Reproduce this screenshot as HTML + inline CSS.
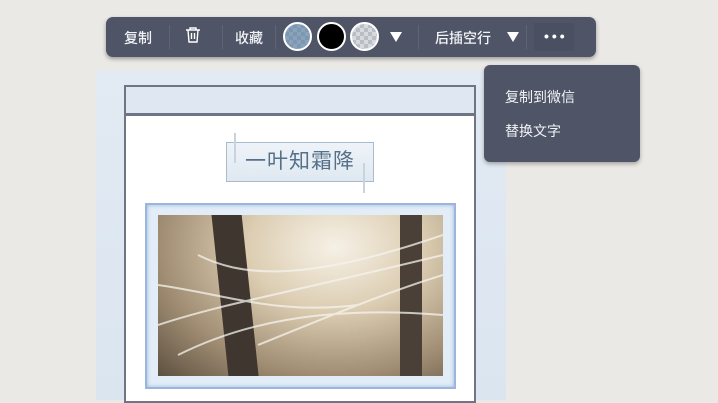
<!DOCTYPE html>
<html><head><meta charset="utf-8"><style>
*{margin:0;padding:0;box-sizing:border-box}
body{width:718px;height:400px;overflow:hidden;background:#ebe9e6;position:relative;font-family:"Liberation Sans","Noto Sans CJK SC",sans-serif}
.abs{position:absolute}
.tb{left:106px;top:17px;width:490px;height:40px;background:#4f5567;border-radius:7px;box-shadow:0 2px 4px rgba(0,0,0,.35)}
.t{color:#f2f3f6;font-size:14px;top:11px;font-weight:500}
.sep{top:8px;width:1px;height:24px;background:#5e6475}
.circ{top:5px;width:29px;height:29px;border-radius:50%;border:2px solid #fff}
.tri{width:0;height:0;border-left:6px solid transparent;border-right:6px solid transparent;border-top:10px solid #fff;top:15px}
.dd{left:484px;top:65px;width:156px;height:97px;background:#4f5567;border-radius:6px;box-shadow:0 2px 4px rgba(0,0,0,.3)}
</style></head><body>
<div class="abs" style="left:96px;top:71px;width:410px;height:329px;background:linear-gradient(180deg,#e2eaf3,#dbe5f0)"></div>
<div class="abs" style="left:124px;top:85px;width:352px;height:30px;border:2px solid #6f7584;background:#dfe8f2"></div>
<div class="abs" style="left:124px;top:113px;width:352px;height:290px;border:2px solid #6f7584;border-top:3px solid #6f7584;background:#fff"></div>
<div class="abs" style="left:226px;top:142px;width:148px;height:40px;border:1px solid #a9bccd;background:linear-gradient(180deg,#eef3f8,#dfe8f1);color:#56708a;font-size:21px;text-align:center;line-height:38px;letter-spacing:1px">一叶知霜降</div>
<div class="abs" style="left:234px;top:133px;width:2px;height:30px;background:#c9d3dd"></div>
<div class="abs" style="left:363px;top:163px;width:2px;height:30px;background:#c9d3dd"></div>
<div class="abs" style="left:145px;top:203px;width:311px;height:186px;background:#e3edf8;border:2px solid #9ab6dc;box-shadow:inset 0 0 4px #9ab6dc"></div>
<div class="abs" style="left:158px;top:215px;width:285px;height:161px;background:radial-gradient(ellipse at 62% 20%,#f6f1e6 0%,#dccdb2 35%,#a08d73 70%,#5e5040 100%);overflow:hidden">
<div class="abs" style="left:62px;top:-10px;width:30px;height:180px;background:#3f3630;transform:rotate(-6deg)"></div>
<div class="abs" style="left:242px;top:0;width:22px;height:161px;background:#4a4038"></div>
<svg class="abs" style="left:0;top:0" width="285" height="161" fill="none" stroke="rgba(245,243,238,.75)" stroke-width="2"><path d="M0 110C60 90 120 80 285 40M0 70C70 80 120 100 200 90M20 140C80 110 160 90 285 100M40 40C80 60 140 70 285 20M100 130C150 110 220 80 285 60"/></svg>
</div>
<div class="abs tb">
<div class="abs t" style="left:18px">复制</div>
<div class="abs sep" style="left:63px"></div>
<svg class="abs" style="left:79px;top:9px" width="16" height="18" viewBox="0 0 16 18" fill="none" stroke="#fff" stroke-width="1.4"><path d="M1 4h14M5 4V2h6v2M3 4l1 12h8l1-12M6.5 7v6M9.5 7v6"/></svg>
<div class="abs sep" style="left:116px"></div>
<div class="abs t" style="left:129px">收藏</div>
<div class="abs sep" style="left:169px"></div>
<div class="abs circ" style="left:177px;background:repeating-conic-gradient(#8aa3bb 0 25%,#7b97b2 0 50%) 0 0/8px 8px"></div>
<div class="abs circ" style="left:211px;background:#000"></div>
<div class="abs circ" style="left:244px;background:repeating-conic-gradient(#d6d9dd 0 25%,#b9bec5 0 50%) 0 0/8px 8px"></div>
<div class="abs tri" style="left:284px"></div>
<div class="abs sep" style="left:312px"></div>
<div class="abs t" style="left:329px">后插空行</div>
<div class="abs tri" style="left:401px"></div>
<div class="abs sep" style="left:420px"></div>
<div class="abs" style="left:428px;top:6px;width:40px;height:28px;background:#4a5061"></div>
<div class="abs" style="left:438px;top:15px;color:#fff;font-size:14px;letter-spacing:3px;font-weight:bold;line-height:8px">•••</div>
</div>
<div class="abs dd">
<div class="abs" style="left:21px;top:22px;color:#f2f3f6;font-size:14px">复制到微信</div>
<div class="abs" style="left:21px;top:56px;color:#f2f3f6;font-size:14px">替换文字</div>
</div>
</body></html>
